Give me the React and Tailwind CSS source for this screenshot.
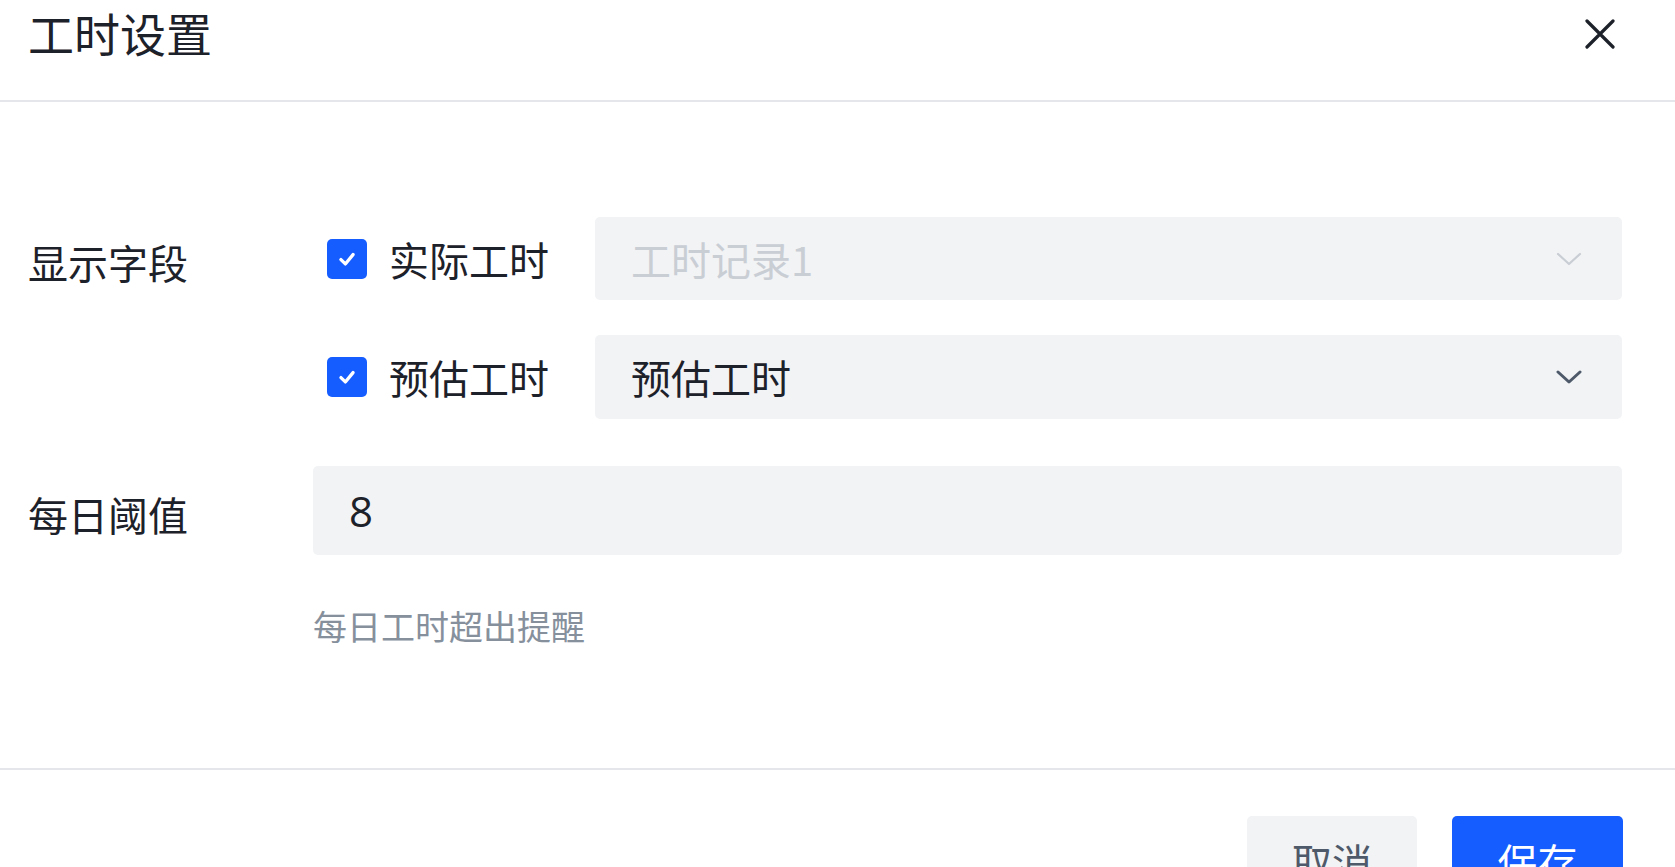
import React, { useState } from 'react';

const font = { fontFamily: '"Noto Sans CJK SC", "Noto Sans", sans-serif' };

const Checkbox = ({ checked, onChange }) => (
  <button
    type="button"
    onClick={onChange}
    className={`w-[40px] h-[40px] rounded-[5px] flex items-center justify-center shrink-0 ${
      checked ? 'bg-[#165dff]' : 'bg-white border-2 border-[#e5e6eb]'
    }`}
  >
    {checked && (
      <svg width="22" height="22" viewBox="0 0 20 20" fill="none">
        <path d="M4.5 10.5 L8.5 14.5 L15.5 6" stroke="white" strokeWidth="3" strokeLinecap="round" strokeLinejoin="round" />
      </svg>
    )}
  </button>
);

const Chevron = ({ disabled }) => (
  <svg width="26" height="14" viewBox="0 0 26 14" fill="none">
    <path
      d="M2 2 L13 12 L24 2"
      stroke={disabled ? '#c9cdd4' : '#4e5969'}
      strokeWidth={disabled ? '2.2' : '3'}
      strokeLinecap="round"
      strokeLinejoin="round"
    />
  </svg>
);

const App = () => {
  const [actual, setActual] = useState(true);
  const [estimate, setEstimate] = useState(true);
  const [threshold, setThreshold] = useState('8');

  return (
    <div className="w-[1675px] h-[867px] overflow-hidden bg-white text-[#1d2129]" style={font}>
      {/* header */}
      <div className="h-[102px] pt-[6px] pb-[33px] pl-[28px] pr-[60px] flex items-center justify-between border-b-2 border-[#e5e6eb]">
        <h2 className="text-[46px] leading-[52px] font-normal -mt-[10px]">工时设置</h2>
        <button type="button" className="w-[30px] h-[30px] flex items-center justify-center -mt-[6px]">
          <svg width="30" height="30" viewBox="0 0 30 30" fill="none">
            <path d="M2 2 L28 28 M28 2 L2 28" stroke="#1d2129" strokeWidth="3.2" strokeLinecap="round" />
          </svg>
        </button>
      </div>

      {/* body */}
      <div className="h-[668px] pt-[115px] pl-[28px] pr-[53px] border-b-2 border-[#e5e6eb]">
        <div className="flex">
          <div className="w-[285px] h-[83px] flex items-center text-[40px] leading-[50px] pt-[6px]">显示字段</div>
          <div className="flex-1 flex flex-col gap-[35px]">
            <div className="flex items-center h-[83px]">
              <div className="pl-[14px]">
                <Checkbox checked={actual} onChange={() => setActual(!actual)} />
              </div>
              <span className="ml-[22px] text-[40px] leading-[50px] whitespace-nowrap">实际工时</span>
              <div className="ml-[46px] flex-1 h-[83px] rounded-[5px] bg-[#f2f3f5] flex items-center justify-between pl-[36px] pr-[40px]">
                <span className="text-[40px] leading-[50px] text-[#c9cdd4]">工时记录1</span>
                <Chevron disabled />
              </div>
            </div>
            <div className="flex items-center h-[84px]">
              <div className="pl-[14px]">
                <Checkbox checked={estimate} onChange={() => setEstimate(!estimate)} />
              </div>
              <span className="ml-[22px] text-[40px] leading-[50px] whitespace-nowrap">预估工时</span>
              <div className="ml-[46px] flex-1 h-[84px] rounded-[5px] bg-[#f2f3f5] flex items-center justify-between pl-[36px] pr-[40px]">
                <span className="text-[40px] leading-[50px]">预估工时</span>
                <Chevron />
              </div>
            </div>
          </div>
        </div>

        <div className="flex mt-[47px]">
          <div className="w-[285px] h-[89px] flex items-center text-[40px] leading-[50px] pt-[6px]">每日阈值</div>
          <div className="flex-1">
            <input
              type="text"
              value={threshold}
              onChange={(e) => setThreshold(e.target.value)}
              className="w-full h-[89px] rounded-[5px] bg-[#f2f3f5] pl-[36px] text-[42px] outline-none"
              style={{ fontFamily: '"Open Sans", "Noto Sans CJK SC", sans-serif' }}
            />
            <p className="mt-[51px] text-[34px] leading-[40px] text-[#86909c]">每日工时超出提醒</p>
          </div>
        </div>
      </div>

      {/* footer */}
      <div className="flex justify-end gap-[35px] pt-[46px] pr-[52px]">
        <button type="button" className="w-[170px] h-[90px] rounded-[5px] bg-[#f2f3f5] text-[40px] text-[#4e5969]">
          取消
        </button>
        <button type="button" className="w-[171px] h-[90px] rounded-[5px] bg-[#165dff] text-[40px] text-white">
          保存
        </button>
      </div>
    </div>
  );
};

export default App;
